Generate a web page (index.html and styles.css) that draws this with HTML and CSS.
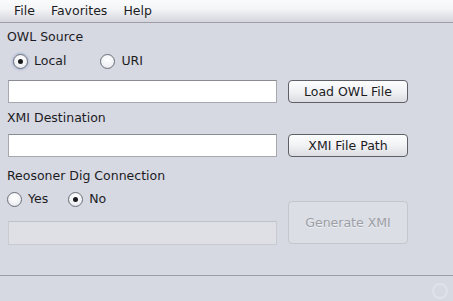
FILE: index.html
```html
<!DOCTYPE html>
<html lang="en">
<head>
  <meta charset="UTF-8">
  <meta name="viewport" content="width=device-width, initial-scale=1.0">
  <title>OWL to XMI</title>
  <link rel="stylesheet" href="styles.css">
</head>
<body>
  <div class="menubar">
    <span class="menu-item">File</span>
    <span class="menu-item">Favorites</span>
    <span class="menu-item">Help</span>
  </div>

  <div class="main">
    <div class="form">
      <div class="label first">OWL Source</div>

      <div class="radios owl-radios">
        <label class="radio checked focus"><span class="dot"></span>Local</label>
        <label class="radio uri"><span class="dot"></span>URI</label>
      </div>

      <div class="field row-field"></div>
      <button class="btn row-field">Load OWL File</button>

      <div class="label">XMI Destination</div>

      <div class="field row-field"></div>
      <button class="btn row-field">XMI File Path</button>

      <div class="label dig">Reosoner Dig Connection</div>

      <div class="radios dig-radios">
        <label class="radio"><span class="dot"></span>Yes</label>
        <label class="radio no checked"><span class="dot"></span>No</label>
      </div>

      <div class="field disabled last-field"></div>
      <button class="btn btn-generate" disabled>Generate XMI</button>
    </div>
  </div>

  <div class="statusbar">
    <span class="grip"></span>
  </div>
</body>
</html>
```

FILE: styles.css
```css
:root {
  --bg: #d6d8e2;
  --text: #1c1c1f;
  --line: #9c9ea8;
}

* {
  box-sizing: border-box;
  margin: 0;
  padding: 0;
}

html, body {
  height: 100%;
}

body {
  font-family: "DejaVu Sans", sans-serif;
  font-size: 12.5px;
  color: var(--text);
  background: var(--bg);
  display: flex;
  flex-direction: column;
  overflow: hidden;
}

/* barra de menu */
.menubar {
  height: 23px;
  display: flex;
  align-items: center;
  padding: 0 6px 1px;
  background: linear-gradient(#fafbfc 0%, #f4f5f7 40%, #e2e3e8 75%, #d4d6dc 100%);
  border-bottom: 1px solid var(--line);
}

.menu-item {
  padding: 0 8px;
  line-height: 14px;
}

/* conteudo */
.main {
  flex: 1;
}

.form {
  display: grid;
  grid-template-columns: 269px 120px;
  column-gap: 11px;
  padding: 0 0 0 8px;
}

.label {
  grid-column: 1;
  height: 14px;
  line-height: 14px;
  margin-top: 8px;
  margin-left: -1px;
  white-space: nowrap;
}

.label.first {
  margin-top: 7px;
}

.label.dig {
  margin-top: 12px;
}

.radios {
  grid-column: 1;
  display: flex;
  align-items: center;
  height: 20px;
  margin-top: 7px;
}

.dig-radios {
  margin-top: 6px;
}

.owl-radios {
  padding-left: 5px;
}

.dig-radios {
  padding-left: 0;
  margin-left: -1px;
}

.radio {
  display: flex;
  align-items: center;
  gap: 6px;
  line-height: 14px;
}

.radio.uri {
  margin-left: 34px;
}

.radio.no {
  margin-left: 20px;
}

.dot {
  width: 15px;
  height: 15px;
  border-radius: 50%;
  border: 1px solid #6c6e78;
  background: radial-gradient(circle at 50% 35%, #ffffff 0%, #f2f3f6 55%, #dcdee4 100%);
  display: flex;
  align-items: center;
  justify-content: center;
}

.radio.focus .dot {
  box-shadow: 0 0 2px 1px #a9b9d6;
}

.radio.checked .dot::after {
  content: "";
  width: 5px;
  height: 5px;
  border-radius: 50%;
  background: #1a1a1e;
}

.field {
  grid-column: 1;
  height: 23px;
  background: #ffffff;
  border: 1px solid #a6a8b0;
  border-top-color: #8a8c94;
}

.row-field {
  margin-top: 9px;
}

.field.disabled {
  background: #dfe0e6;
  border-color: #c9cbd3;
  border-top-color: #c0c2ca;
}

.last-field {
  grid-row: 8;
  margin-top: 12px;
  height: 24px;
}

.btn {
  grid-column: 2;
  height: 23px;
  font-family: inherit;
  font-size: 12.5px;
  color: var(--text);
  border: 1px solid #5e6068;
  border-radius: 4px;
  background: linear-gradient(#fdfdfe 0%, #f1f2f4 50%, #dcdde2 100%);
  cursor: pointer;
}

.btn-generate {
  grid-row: 7 / span 2;
  align-self: start;
  margin-top: 18px;
  height: 43px;
  color: #9c9ea6;
  text-shadow: 0 1px 0 #eef0f4;
  border-color: #c4c6ce;
  background: #dcdee5;
  cursor: default;
}

/* barra inferior */
.statusbar {
  height: 26px;
  border-top: 1px solid var(--line);
  display: flex;
  justify-content: flex-end;
  align-items: center;
  padding-right: 5px;
}

.grip {
  width: 16px;
  height: 16px;
  border-radius: 50%;
  border: 2px solid #e0e2ea;
  margin-top: 4px;
}
```
